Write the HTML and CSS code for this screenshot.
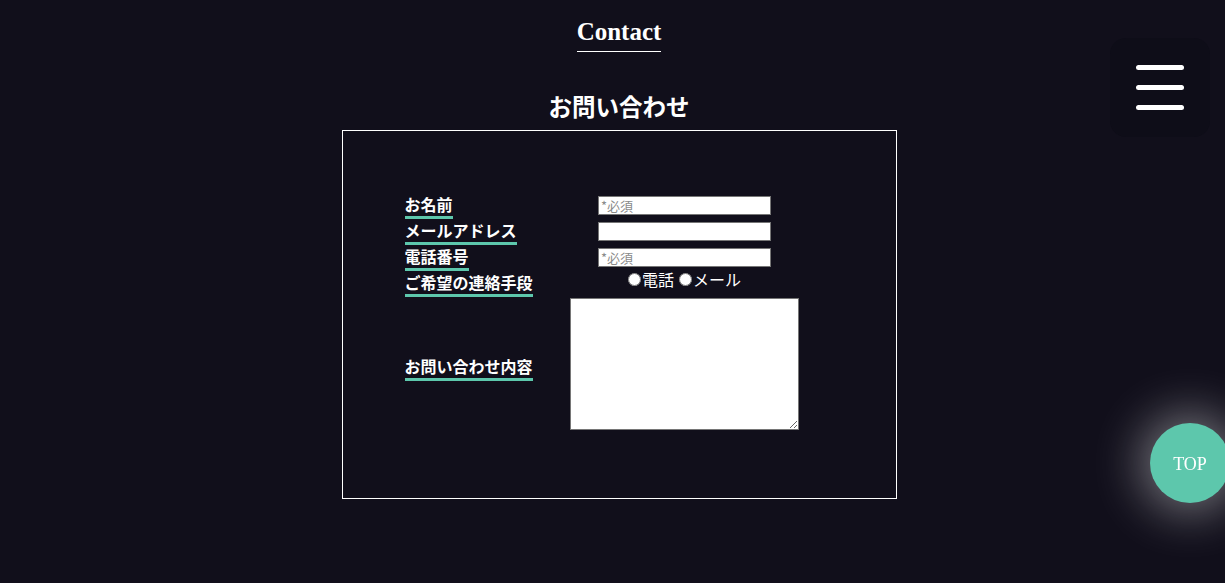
FILE: index.html
```html
<!DOCTYPE html>
<html lang="ja">
<head>
<meta charset="utf-8">
<title>Contact</title>
<link rel="stylesheet" href="styles.css">
</head>
<body>
<main class="page">
  <h1 class="page-title"><span>Contact</span></h1>
  <h2 class="form-title">お問い合わせ</h2>
  <form class="form-box">
    <div class="form-grid">
      <div class="label"><span>お名前</span></div>
      <div class="field"><input type="text" class="text-input" placeholder="*必須"></div>

      <div class="label"><span>メールアドレス</span></div>
      <div class="field"><input type="email" class="text-input"></div>

      <div class="label"><span>電話番号</span></div>
      <div class="field"><input type="tel" class="text-input" placeholder="*必須"></div>

      <div class="label"><span>ご希望の連絡手段</span></div>
      <div class="field radios">
        <label class="radio"><input type="radio" name="how">電話</label>
        <label class="radio"><input type="radio" name="how">メール</label>
      </div>

      <div class="label label-tall"><span>お問い合わせ内容</span></div>
      <div class="field"><textarea class="textarea"></textarea></div>
    </div>
  </form>
</main>

<button class="menu-btn" type="button" aria-label="menu">
  <span class="bar"></span>
  <span class="bar"></span>
  <span class="bar"></span>
</button>

<a class="top-btn" href="#">TOP</a>
</body>
</html>
```

FILE: styles.css
```css
html, body {
  margin: 0;
  padding: 0;
  background: #110f1b;
  height: 100%;
  overflow: hidden;
}

body {
  color: #ffffff;
  font-family: "Noto Sans CJK JP", "Noto Sans", sans-serif;
}

.page {
  box-sizing: border-box;
  width: 1225px;
  padding-left: 13px;
  display: flex;
  flex-direction: column;
  align-items: center;
}

.page-title {
  margin: 17px 0 0;
  font-family: "Liberation Serif", "DejaVu Serif", serif;
  font-weight: bold;
  font-size: 25px;
  line-height: 29px;
  text-align: center;
}

.page-title span {
  display: inline-block;
  padding-bottom: 5px;
  border-bottom: 1px solid #ffffff;
}

.form-title {
  margin: 39px 0 5px;
  font-family: "Liberation Serif", "Noto Sans CJK JP", serif;
  font-weight: bold;
  font-size: 23.5px;
  line-height: 34px;
  text-align: center;
}

.form-box {
  box-sizing: border-box;
  width: 555px;
  border: 1px solid #ffffff;
  padding: 63px 0 68px;
  display: flex;
  justify-content: center;
  margin: 0;
}

.form-grid {
  width: 430px;
  margin-left: 1px;
  display: grid;
  grid-template-columns: 130px 300px;
  grid-template-rows: 26px 26px 26px 26px 132px;
}

.label {
  display: flex;
  align-items: flex-start;
  font-size: 16px;
  font-weight: bold;
}

.label span {
  display: inline-block;
  line-height: 20px;
  padding-bottom: 2px;
  border-bottom: 3px solid #5dc7ac;
}

.label-tall {
  align-self: center;
  margin-top: 8px;
}

.field {
  display: flex;
  justify-content: center;
  align-items: center;
}

.text-input {
  box-sizing: border-box;
  width: 173px;
  height: 19px;
  padding: 0 2px;
  border: 1px solid #767676;
  background: #ffffff;
  font-family: "Noto Sans CJK JP", sans-serif;
  font-size: 13px;
  margin-top: -4px;
  outline: none;
}

.text-input::placeholder {
  color: #8a8a8a;
}

.radios {
  font-size: 16px;
  font-weight: normal;
  align-items: flex-start;
  padding-right: 5px;
}

.radio {
  display: inline-flex;
  align-items: center;
  line-height: 20px;
  margin-top: -3px;
}

.radio input {
  margin: 0 1px 0 5px;
  width: 13px;
  height: 13px;
}

.textarea {
  box-sizing: border-box;
  width: 229px;
  height: 132px;
  margin: -1px 0 0;
  border: 1px solid #767676;
  background: #ffffff;
  padding: 2px;
}

.menu-btn {
  position: fixed;
  top: 38px;
  right: 15px;
  width: 100px;
  height: 99px;
  border: none;
  border-radius: 16px;
  background: #0e0d18;
  padding: 0;
  display: flex;
  flex-direction: column;
  align-items: center;
  justify-content: center;
  gap: 15px;
  cursor: pointer;
}

.menu-btn .bar {
  display: block;
  width: 48px;
  height: 5px;
  border-radius: 3px;
  background: #ffffff;
}

.top-btn {
  position: fixed;
  right: -5px;
  bottom: 80px;
  width: 80px;
  height: 80px;
  border-radius: 50%;
  background: #5dc7ac;
  color: #ffffff;
  text-decoration: none;
  font-family: "Liberation Serif", "DejaVu Serif", serif;
  font-size: 18px;
  display: flex;
  align-items: center;
  justify-content: center;
  padding-top: 3px;
  box-sizing: border-box;
  box-shadow: 0 0 50px 8px rgba(255, 255, 255, 0.45);
}
```
